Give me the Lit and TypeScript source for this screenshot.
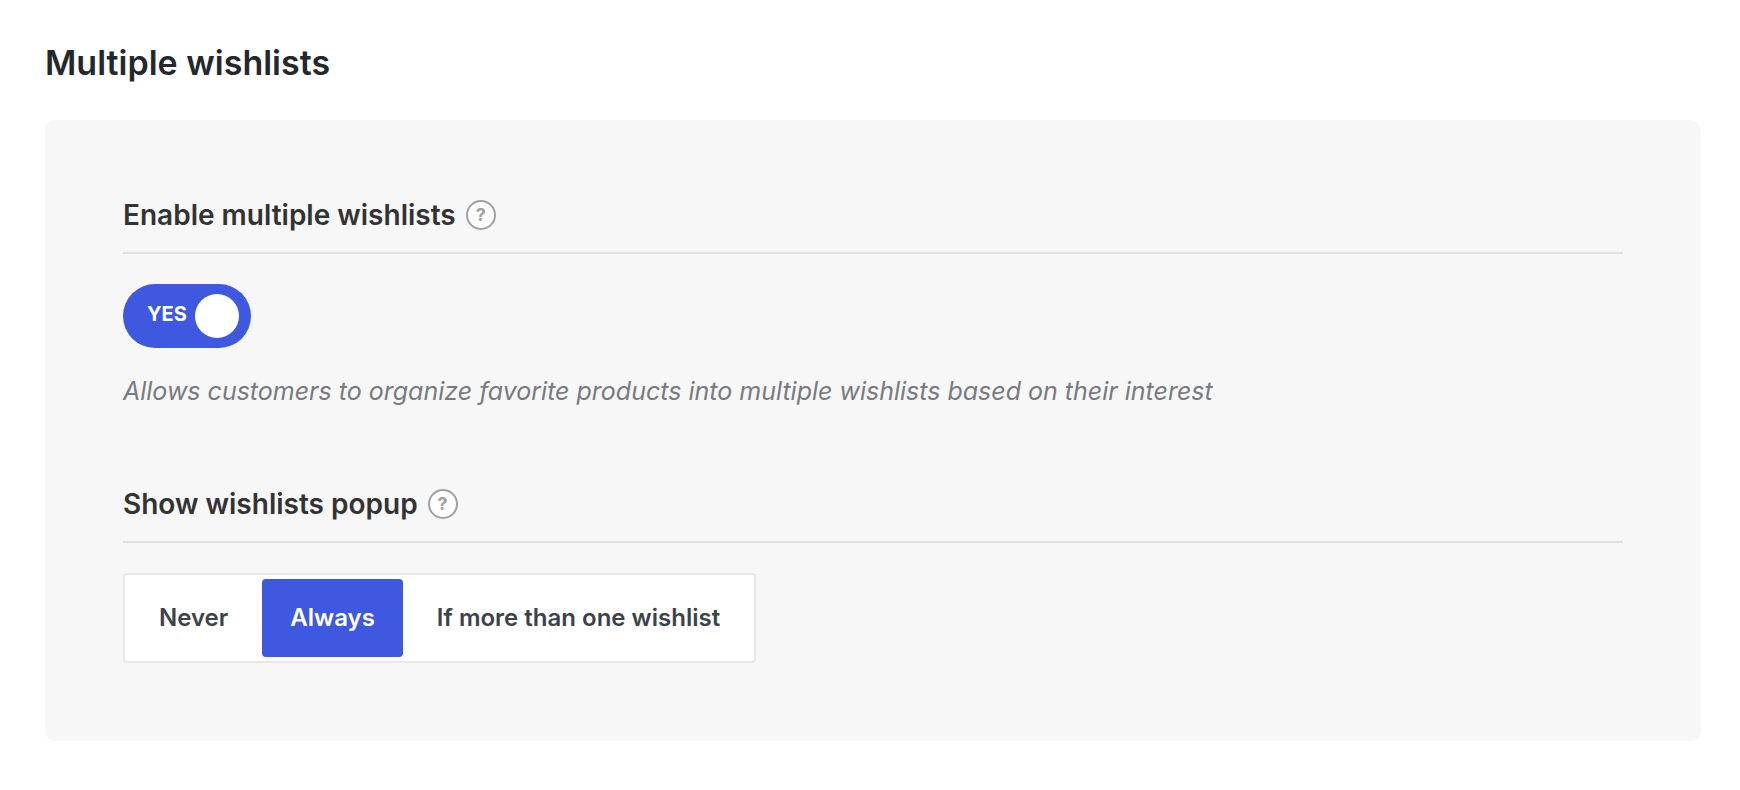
import { LitElement, html, css } from "lit";
import { customElement, property, state } from "lit/decorators.js";

@customElement("setting-field")
class SettingField extends LitElement {
  @property() heading = "";
  @property() hint = "";

  static styles = css`
    :host {
      display: block;
    }
    .header {
      display: flex;
      align-items: center;
      gap: 10px;
      padding-bottom: 19px;
      border-bottom: 2px solid #e0e0e0;
    }
    .title {
      margin: 0;
      font-size: 28px;
      line-height: 36px;
      font-weight: 600;
      color: #333;
    }
    .help {
      box-sizing: border-box;
      width: 30px;
      height: 30px;
      padding: 0;
      border: 2px solid #a0a0a0;
      border-radius: 50%;
      background: #fff;
      color: #a0a0a0;
      font: inherit;
      font-size: 18px;
      line-height: 26px;
      font-weight: 700;
      text-align: center;
      cursor: pointer;
    }
    .body {
      padding-top: 30px;
    }
  `;

  render() {
    return html`
      <div class="header">
        <h2 class="title">${this.heading}</h2>
        <button class="help" type="button" aria-label=${this.hint}>?</button>
      </div>
      <div class="body"><slot></slot></div>
    `;
  }
}

@customElement("toggle-switch")
class ToggleSwitch extends LitElement {
  @property({ type: Boolean }) checked = false;
  @property() label = "";

  static styles = css`
    :host {
      display: flex;
    }
    .track {
      box-sizing: border-box;
      display: flex;
      align-items: center;
      justify-content: space-between;
      width: 128px;
      height: 64px;
      padding: 0 12px 0 24px;
      border-radius: 32px;
      background: #8c8f94;
      color: #fff;
      cursor: pointer;
    }
    .track.on {
      background: #3f58e0;
    }
    .track.off {
      flex-direction: row-reverse;
      padding: 0 24px 0 12px;
    }
    .text {
      font-size: 20px;
      line-height: 24px;
      padding-bottom: 4px;
      font-weight: 700;
    }
    .knob {
      appearance: none;
      width: 44px;
      height: 44px;
      margin: 0;
      border-radius: 50%;
      background: #fff;
      cursor: pointer;
    }
  `;

  private toggle(e: Event) {
    this.checked = (e.target as HTMLInputElement).checked;
  }

  render() {
    return html`
      <label class="track ${this.checked ? "on" : "off"}">
        <span class="text">${this.checked ? "YES" : "NO"}</span>
        <input
          class="knob"
          type="checkbox"
          role="switch"
          aria-label=${this.label}
          .checked=${this.checked}
          @change=${this.toggle}
        />
      </label>
    `;
  }
}

@customElement("segmented-choice")
class SegmentedChoice extends LitElement {
  @property({ type: Array }) options: string[] = [];
  @property() value = "";
  @property() label = "";

  static styles = css`
    :host {
      display: flex;
    }
    .group {
      display: flex;
      gap: 6px;
      padding: 4px 6px;
      border: 2px solid #e8e8e8;
      border-radius: 4px;
      background: #fff;
    }
    .option {
      display: grid;
      align-items: center;
      cursor: pointer;
    }
    .radio,
    .text {
      grid-area: 1 / 1;
    }
    .radio {
      appearance: none;
      align-self: stretch;
      margin: 0;
      border-radius: 4px;
      cursor: pointer;
    }
    .radio:checked {
      background: #3f58e0;
    }
    .text {
      z-index: 1;
      padding: 24px 28px;
      font-size: 24px;
      line-height: 30px;
      font-weight: 600;
      color: #3c434a;
    }
    .radio:checked + .text {
      color: #fff;
    }
  `;

  render() {
    return html`
      <div class="group" role="radiogroup" aria-label=${this.label}>
        ${this.options.map(
          (option) => html`
            <label class="option">
              <input
                class="radio"
                type="radio"
                name="choice"
                .value=${option}
                .checked=${option === this.value}
                @change=${() => (this.value = option)}
              />
              <span class="text">${option}</span>
            </label>
          `
        )}
      </div>
    `;
  }
}

@customElement("app-root")
class AppRoot extends LitElement {
  @state() private popupOptions = ["Never", "Always", "If more than one wishlist"];

  static styles = css`
    :host {
      display: block;
      padding: 40px 39px 48px 45px;
      background: #fff;
      font-family: Inter, "Noto Sans", sans-serif;
    }
    .page-title {
      margin: 0 0 34px;
      font-size: 34px;
      line-height: 46px;
      font-weight: 600;
      color: #23282d;
    }
    .panel {
      display: flex;
      flex-direction: column;
      gap: 78px;
      padding: 77px 78px 78px;
      border-radius: 10px;
      background: #f7f7f7;
    }
    .description {
      margin: 26px 0 0;
      font-size: 25px;
      line-height: 34px;
      font-style: italic;
      color: #777a80;
    }
  `;

  render() {
    return html`
      <h1 class="page-title">Multiple wishlists</h1>
      <div class="panel">
        <setting-field heading="Enable multiple wishlists" hint="Help">
          <toggle-switch checked label="Enable multiple wishlists"></toggle-switch>
          <p class="description">
            Allows customers to organize favorite products into multiple wishlists based on their interest
          </p>
        </setting-field>
        <setting-field heading="Show wishlists popup" hint="Help">
          <segmented-choice
            label="Show wishlists popup"
            value="Always"
            .options=${this.popupOptions}
          ></segmented-choice>
        </setting-field>
      </div>
    `;
  }
}
